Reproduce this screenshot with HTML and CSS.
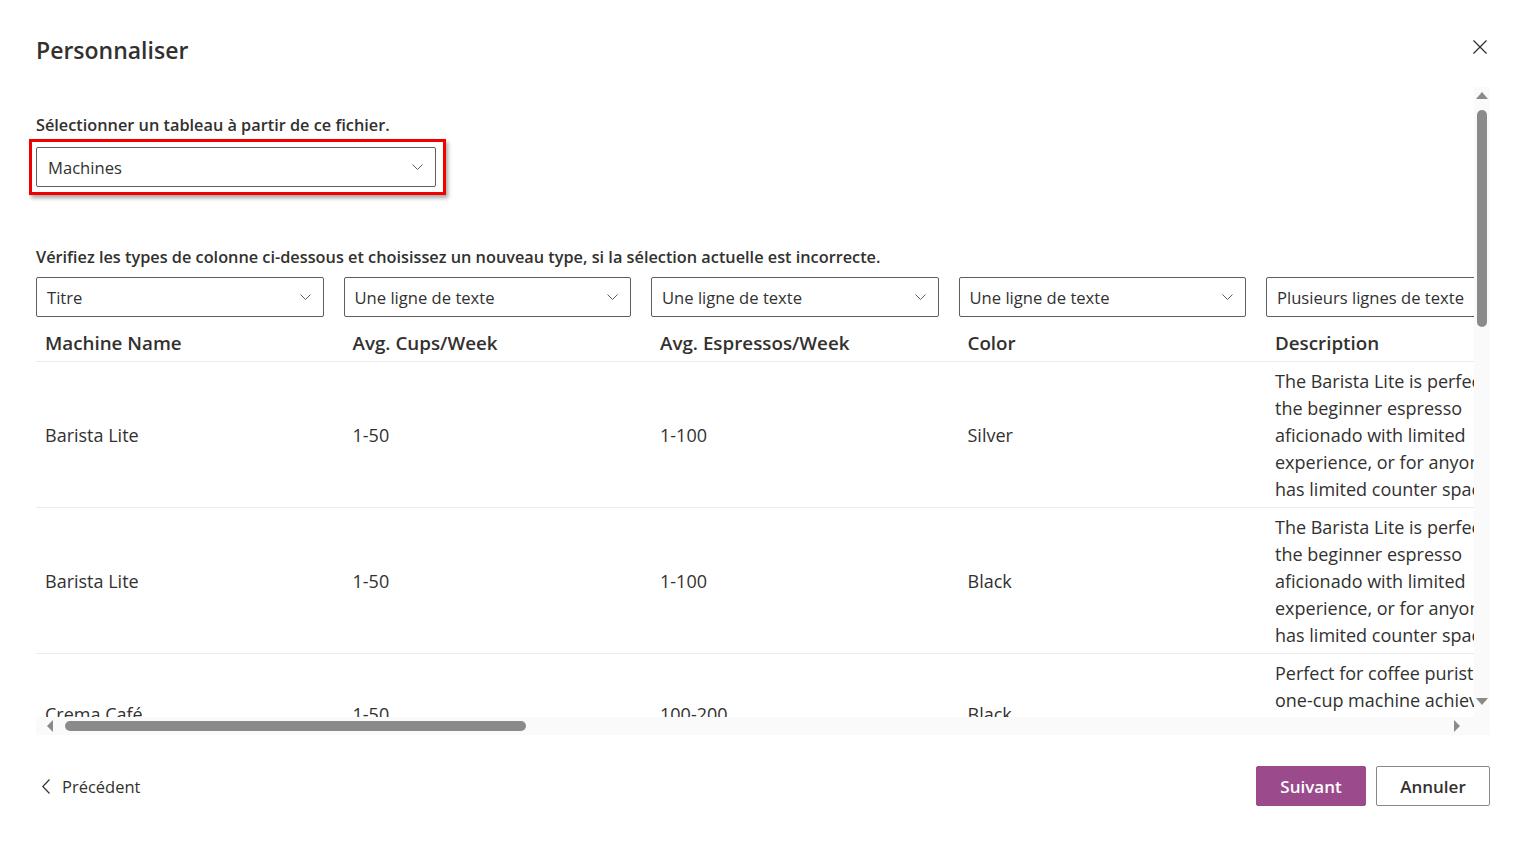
FILE: index.html
```html
<!DOCTYPE html>
<html lang="fr">
<head>
    <meta charset="UTF-8">
    <meta name="viewport" content="width=device-width, initial-scale=1.0">
    <title>Personnaliser</title>
    <link rel="stylesheet" href="styles.css">
</head>
<body>
    <div class="dialog">
        <div class="header">
            <h1>Personnaliser</h1>
            <button class="close" aria-label="Fermer">
                <svg width="14" height="14" viewBox="0 0 14 14"><path d="M0.5 0.5 L13.5 13.5 M13.5 0.5 L0.5 13.5" stroke="#323130" stroke-width="1.3" fill="none"/></svg>
            </button>
        </div>

        <div class="scroll-area">
            <div class="content">
                <div class="label">Sélectionner un tableau à partir de ce fichier.</div>
                <div class="highlight">
                    <div class="dropdown main">
                        <span>Machines</span>
                        <svg class="chev" width="11" height="6" viewBox="0 0 11 6"><path d="M0.5 0.5 L5.5 5.5 L10.5 0.5" stroke="#605e5c" stroke-width="1" fill="none"/></svg>
                    </div>
                </div>

                <div class="label second">Vérifiez les types de colonne ci-dessous et choisissez un nouveau type, si la sélection actuelle est incorrecte.</div>
                <div class="wide">
                    <div class="types">
                        <div class="dropdown"><span>Titre</span><svg class="chev" width="11" height="6" viewBox="0 0 11 6"><path d="M0.5 0.5 L5.5 5.5 L10.5 0.5" stroke="#605e5c" stroke-width="1" fill="none"/></svg></div>
                        <div class="dropdown"><span>Une ligne de texte</span><svg class="chev" width="11" height="6" viewBox="0 0 11 6"><path d="M0.5 0.5 L5.5 5.5 L10.5 0.5" stroke="#605e5c" stroke-width="1" fill="none"/></svg></div>
                        <div class="dropdown"><span>Une ligne de texte</span><svg class="chev" width="11" height="6" viewBox="0 0 11 6"><path d="M0.5 0.5 L5.5 5.5 L10.5 0.5" stroke="#605e5c" stroke-width="1" fill="none"/></svg></div>
                        <div class="dropdown"><span>Une ligne de texte</span><svg class="chev" width="11" height="6" viewBox="0 0 11 6"><path d="M0.5 0.5 L5.5 5.5 L10.5 0.5" stroke="#605e5c" stroke-width="1" fill="none"/></svg></div>
                        <div class="dropdown"><span>Plusieurs lignes de texte</span><svg class="chev" width="11" height="6" viewBox="0 0 11 6"><path d="M0.5 0.5 L5.5 5.5 L10.5 0.5" stroke="#605e5c" stroke-width="1" fill="none"/></svg></div>
                    </div>

                    <div class="row head">
                        <div class="cell">Machine Name</div>
                        <div class="cell">Avg. Cups/Week</div>
                        <div class="cell">Avg. Espressos/Week</div>
                        <div class="cell">Color</div>
                        <div class="cell">Description</div>
                    </div>
                    <div class="row">
                        <div class="cell">Barista Lite</div>
                        <div class="cell">1-50</div>
                        <div class="cell">1-100</div>
                        <div class="cell">Silver</div>
                        <div class="cell desc">The Barista Lite is perfect for<br>the beginner espresso<br>aficionado with limited<br>experience, or for anyone who<br>has limited counter space.</div>
                    </div>
                    <div class="row">
                        <div class="cell">Barista Lite</div>
                        <div class="cell">1-50</div>
                        <div class="cell">1-100</div>
                        <div class="cell">Black</div>
                        <div class="cell desc">The Barista Lite is perfect for<br>the beginner espresso<br>aficionado with limited<br>experience, or for anyone who<br>has limited counter space.</div>
                    </div>
                    <div class="row">
                        <div class="cell">Crema Café</div>
                        <div class="cell">1-50</div>
                        <div class="cell">100-200</div>
                        <div class="cell">Black</div>
                        <div class="cell desc">Perfect for coffee purists, this<br>one-cup machine achieves<br>a rich espresso with a thick<br>golden crema every time.</div>
                    </div>
                </div>
            </div>

            <div class="vbar">
                <svg class="arrow-up" width="12" height="7" viewBox="0 0 12 7"><path d="M6 0 L12 7 L0 7 Z" fill="#8a8a8a"/></svg>
                <div class="vthumb"></div>
                <svg class="arrow-down" width="12" height="7" viewBox="0 0 12 7"><path d="M0 0 L12 0 L6 7 Z" fill="#8a8a8a"/></svg>
            </div>
            <div class="hbar">
                <svg class="arrow-left" width="6" height="12" viewBox="0 0 6 12"><path d="M6 0 L6 12 L0 6 Z" fill="#8a8a8a"/></svg>
                <div class="hthumb"></div>
                <svg class="arrow-right" width="6" height="12" viewBox="0 0 6 12"><path d="M0 0 L6 6 L0 12 Z" fill="#8a8a8a"/></svg>
            </div>
        </div>

        <div class="footer">
            <button class="back">
                <svg width="8" height="15" viewBox="0 0 8 15"><path d="M7.5 0.5 L0.8 7.5 L7.5 14.5" stroke="#323130" stroke-width="1.2" fill="none"/></svg>
                <span>Précédent</span>
            </button>
            <div class="actions">
                <button class="btn primary">Suivant</button>
                <button class="btn">Annuler</button>
            </div>
        </div>
    </div>
</body>
</html>
```

FILE: styles.css
```css
body {
    margin: 0;
    font-family: "Open Sans", "Noto Sans", sans-serif;
    color: #323130;
    background: white;
}
.dialog {
    padding: 0 40px 0 36px;
}
.header {
    display: flex;
    justify-content: space-between;
    align-items: flex-start;
    height: 87px;
}
.header h1 {
    margin: 34px 0 0;
    font-size: 23px;
    font-weight: 600;
    line-height: 32px;
}
.close {
    margin: 40px 3px 0 0;
    padding: 0;
    border: none;
    background: none;
}
/* pulled 7px left so the red frame round the first dropdown is not clipped */
.scroll-area {
    position: relative;
    height: 648px;
    margin-left: -7px;
    padding-left: 7px;
    overflow: hidden;
}
.content {
    padding-top: 27px;
}
.label {
    font-size: 16.3px;
    font-weight: 600;
    line-height: 22px;
}
.label.second {
    margin-top: 51px;
}
.highlight {
    display: inline-block;
    margin: 3px 0 0 -7px;
    padding: 5px 7px 5px 4px;
    border: 3px solid #f00000;
    box-shadow: 2px 3px 4px rgba(0, 0, 0, 0.35);
}
.dropdown {
    box-sizing: border-box;
    height: 40px;
    display: flex;
    align-items: center;
    justify-content: space-between;
    padding: 0 12px 0 11px;
    border: 1px solid #605e5c;
    border-radius: 2px;
    font-size: 16.6px;
    white-space: nowrap;
    overflow: hidden;
}
.dropdown.main {
    width: 400px;
}
.chev {
    flex: none;
}
.wide {
    width: 1900px;
}
.types {
    display: grid;
    grid-template-columns: repeat(5, 287.5px);
    column-gap: 20px;
    margin-top: 9px;
}
.types .dropdown {
    padding-left: 10px;
}
.row {
    display: grid;
    grid-template-columns: repeat(5, 307.5px);
    border-bottom: 1px solid #edebe9;
    font-size: 18px;
    line-height: 27px;
    align-items: center;
}
.row.head {
    height: 44px;
    font-size: 18.8px;
    font-weight: 600;
}
.row.head .cell {
    padding-top: 12px;
}
.cell {
    padding: 6px 9px 4px;
    white-space: nowrap;
}
.desc {
    overflow: hidden;
}
.vbar {
    position: absolute;
    top: 0;
    right: 0;
    width: 16px;
    height: 630px;
    background: #fafafa;
}
.arrow-up {
    position: absolute;
    top: 5px;
    left: 2px;
}
.arrow-down {
    position: absolute;
    top: 611px;
    left: 2px;
}
.vthumb {
    position: absolute;
    top: 23px;
    left: 3px;
    width: 10px;
    height: 217px;
    border-radius: 5px;
    background: #8a8a8a;
}
.hbar {
    position: absolute;
    left: 7px;
    right: 0;
    bottom: 0;
    height: 18px;
    background: #fafafa;
}
.arrow-left {
    position: absolute;
    left: 11px;
    top: 3px;
}
.arrow-right {
    position: absolute;
    left: 1418px;
    top: 3px;
}
.hthumb {
    position: absolute;
    left: 29px;
    top: 4px;
    width: 461px;
    height: 10px;
    border-radius: 5px;
    background: #8a8a8a;
}
.footer {
    display: flex;
    justify-content: space-between;
    align-items: center;
    padding-top: 31px;
}
.back {
    display: flex;
    align-items: center;
    gap: 12px;
    padding: 0 0 0 6px;
    border: none;
    background: none;
    font-family: inherit;
    font-size: 16.5px;
    color: #323130;
}
.actions {
    display: flex;
    gap: 10px;
}
.btn {
    height: 40px;
    min-width: 114px;
    padding: 0 20px;
    border: 1px solid #8a8886;
    border-radius: 2px;
    background: white;
    font-family: inherit;
    font-size: 17px;
    font-weight: 600;
    color: #323130;
}
.btn.primary {
    min-width: 110px;
    border-color: #9b4a8c;
    background: #9b4a8c;
    color: white;
}
```
